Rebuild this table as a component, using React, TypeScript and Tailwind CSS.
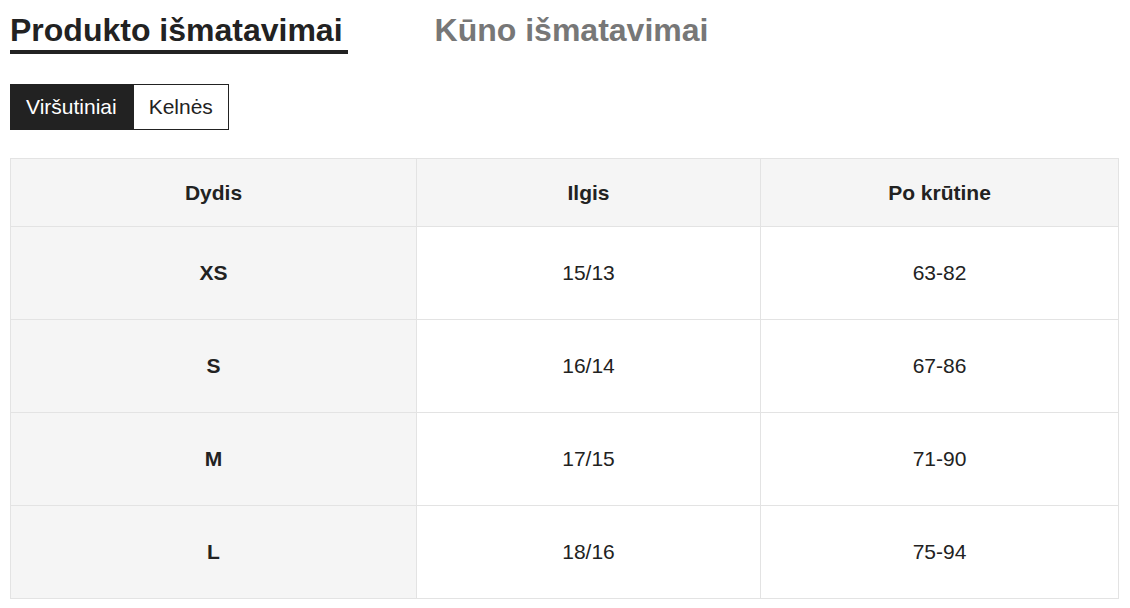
const rows = [
  { size: "XS", length: "15/13", chest: "63-82" },
  { size: "S", length: "16/14", chest: "67-86" },
  { size: "M", length: "17/15", chest: "71-90" },
  { size: "L", length: "18/16", chest: "75-94" },
];

const App = () => {
  return (
    <div className="min-h-screen bg-white px-[10px] pt-[12px] text-[#222] [font-family:'Liberation_Sans',Arial,sans-serif]">
      <div className="flex items-start gap-[87px]">
        <h2 className="border-b-4 border-[#222] pr-[5px] pb-[2px] text-[32px] font-bold leading-[36px]">
          Produkto išmatavimai
        </h2>
        <h2 className="text-[32px] font-bold leading-[36px] text-[#777]">Kūno išmatavimai</h2>
      </div>

      <div className="mt-[30px] flex">
        <button className="h-[46px] bg-[#222] px-4 text-[21px] text-white">Viršutiniai</button>
        <button className="h-[46px] border border-[#222] px-[15px] text-[21px] text-[#222]">Kelnės</button>
      </div>

      <table className="mt-[28px] w-[1109px] table-fixed border-collapse text-[21px]">
        <colgroup>
          <col className="w-[406px]" />
          <col className="w-[344px]" />
          <col />
        </colgroup>
        <thead>
          <tr className="h-[68px] bg-[#f5f5f5]">
            <th className="border border-[#e3e3e3] font-bold">Dydis</th>
            <th className="border border-[#e3e3e3] font-bold">Ilgis</th>
            <th className="border border-[#e3e3e3] font-bold">Po krūtine</th>
          </tr>
        </thead>
        <tbody>
          {rows.map((r) => (
            <tr key={r.size} className="h-[93px]">
              <td className="border border-[#e3e3e3] bg-[#f5f5f5] text-center font-bold">{r.size}</td>
              <td className="border border-[#e3e3e3] text-center">{r.length}</td>
              <td className="border border-[#e3e3e3] text-center">{r.chest}</td>
            </tr>
          ))}
        </tbody>
      </table>
    </div>
  );
};

export default App;
